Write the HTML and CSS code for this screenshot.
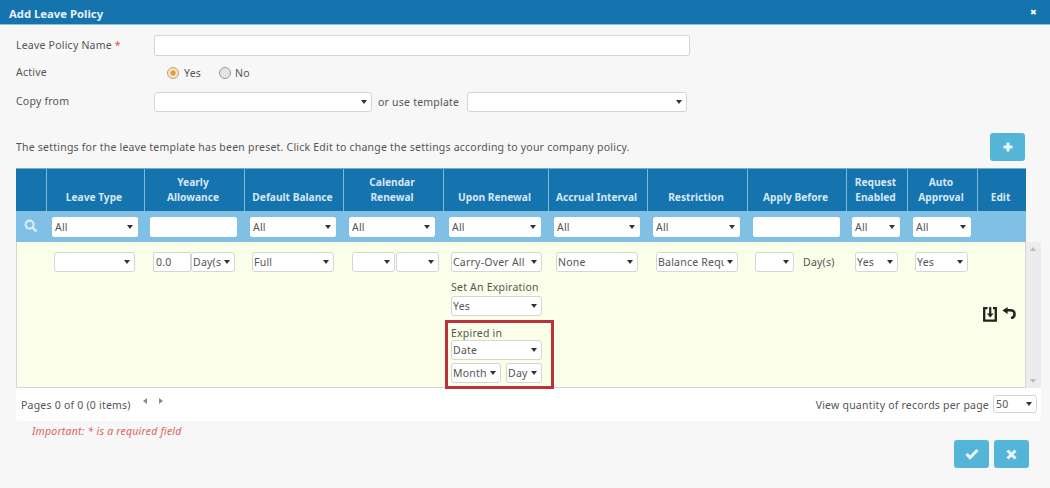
FILE: index.html
```html
<!DOCTYPE html>
<html lang="en">
<head>
<meta charset="utf-8">
<title>Add Leave Policy</title>
<link rel="stylesheet" href="styles.css">
</head>
<body>
<div class="titlebar"><span class="title">Add Leave Policy</span><span class="close">✖</span></div>

<div class="form">
  <div class="form-row r1"><label class="lbl">Leave Policy Name <span class="req">*</span></label><input class="field w-name" type="text"></div>
  <div class="form-row r2"><label class="lbl">Active</label>
    <div class="radios">
      <span class="radio on"></span><span class="rtext">Yes</span>
      <span class="radio"></span><span class="rtext">No</span>
    </div>
  </div>
  <div class="form-row r3"><label class="lbl">Copy from</label>
    <div class="sel w-copy"></div><span class="or">or use template</span><div class="sel w-tpl"></div>
  </div>
</div>

<div class="info">
  <span>The settings for the leave template has been preset. Click Edit to change the settings according to your company policy.</span>
  <button class="btn" aria-label="Add"><svg width="12" height="12" viewBox="0 0 12 12"><path d="M6 1.5v9M1.5 6h9" stroke="#eaf6fb" stroke-width="3"/></svg></button>
</div>

<div class="grid">
  <div class="cols head">
    <div></div>
    <div>Leave Type</div>
    <div>Yearly<br>Allowance</div>
    <div>Default Balance</div>
    <div>Calendar<br>Renewal</div>
    <div>Upon Renewal</div>
    <div>Accrual Interval</div>
    <div>Restriction</div>
    <div>Apply Before</div>
    <div>Request<br>Enabled</div>
    <div>Auto<br>Approval</div>
    <div>Edit</div>
  </div>
  <div class="cols filter">
    <div class="search"><svg width="14" height="14" viewBox="0 0 14 14"><circle cx="5.6" cy="5.6" r="4" fill="none" stroke="#d6ecf8" stroke-width="2.2"/><path d="M8.6 8.6l4 4" stroke="#d6ecf8" stroke-width="2.6"/></svg></div>
    <div><div class="sel flat w86">All</div></div>
    <div><input class="field flat w87" type="text"></div>
    <div><div class="sel flat w86">All</div></div>
    <div><div class="sel flat w86">All</div></div>
    <div><div class="sel flat w92">All</div></div>
    <div><div class="sel flat w86">All</div></div>
    <div><div class="sel flat w87">All</div></div>
    <div><input class="field flat w87" type="text"></div>
    <div><div class="sel flat w48">All</div></div>
    <div><div class="sel flat w58">All</div></div>
    <div></div>
  </div>
  <div class="body-wrap">
    <div class="cols body">
      <div></div>
      <div class="c-a"><div class="sel w81"></div></div>
      <div class="c-b"><div class="inline"><input class="field w38" type="text" value="0.0"><div class="sel w44">Day(s</div></div></div>
      <div class="c-c"><div class="sel w82">Full</div></div>
      <div class="c-d"><div class="inline g1"><div class="sel w43"></div><div class="sel w43"></div></div></div>
      <div class="c-e">
        <div class="sel w91">Carry-Over All</div>
        <div class="small-label first">Set An Expiration</div>
        <div class="sel w91">Yes</div>
        <div class="highlight">
          <div class="small-label">Expired in</div>
          <div class="sel w91">Date</div>
          <div class="inline g5 mt3"><div class="sel w50">Month</div><div class="sel w36">Day</div></div>
        </div>
      </div>
      <div class="c-f"><div class="sel w82">None</div></div>
      <div class="c-g"><div class="sel w82 clip"><span class="clip-text">Balance Requ</span></div></div>
      <div class="c-h"><div class="inline"><div class="sel w39"></div><span class="days">Day(s)</span></div></div>
      <div class="c-i"><div class="sel w43">Yes</div></div>
      <div class="c-j"><div class="sel w53">Yes</div></div>
      <div class="c-k">
        <svg width="14" height="15" viewBox="0 0 14 15"><path d="M4.5 1.2H1.2v12.4h11.6V1.2H10" fill="none" stroke="#222" stroke-width="2.3"/><path d="M7.2 0v7" stroke="#222" stroke-width="2.2"/><path d="M3.8 6.5h6.8L7.2 10.5z" fill="#222"/></svg>
        <svg width="14" height="12" viewBox="0 0 14 12"><path d="M5 3.2h3.4c5.4 0 5.4 7 .6 8" fill="none" stroke="#222" stroke-width="2.5"/><path d="M5.6 0v7L.4 3.4z" fill="#222"/></svg>
      </div>
    </div>
    <div class="scroll"><span class="up"></span><span class="down"></span></div>
  </div>
  <div class="pager">
    <div class="pages"><span>Pages 0 of 0 (0 items)</span><span class="arrow left"></span><span class="arrow right"></span></div>
    <div class="perpage"><span>View quantity of records per page</span><div class="sel w44">50</div></div>
  </div>
</div>

<div class="important">Important: * is a required field</div>

<div class="actions">
  <button class="btn" aria-label="Save"><svg width="14" height="12" viewBox="0 0 14 12"><path d="M1.5 6l3.6 3.6L12.5 2" fill="none" stroke="#eaf6fb" stroke-width="3"/></svg></button>
  <button class="btn" aria-label="Cancel"><svg width="11" height="11" viewBox="0 0 11 11"><path d="M1.5 1.5l8 8M9.5 1.5l-8 8" stroke="#eaf6fb" stroke-width="3"/></svg></button>
</div>
</body>
</html>
```

FILE: styles.css
```css
* { box-sizing: border-box; }
html, body { margin: 0; padding: 0; }
body {
  width: 1050px;
  height: 488px;
  overflow: hidden;
  background: #f7f7f7;
  color: #555;
  font-family: "Noto Sans", "DejaVu Sans", sans-serif;
  font-size: 10.5px;
  letter-spacing: 0.22px;
}

.titlebar {
  height: 25px;
  background: #1573ae;
  border-bottom: 1px solid #8dbfdc;
  color: #fff;
  display: flex;
  justify-content: space-between;
  padding: 5px 13px 0 9px;
}
.title { font-size: 11.3px; font-weight: 700; letter-spacing: 0; line-height: 17px; color: #e6f1f8; }
.close { font-size: 8px; line-height: 13px; }

.form { padding: 10px 0 0 16px; }
.form-row { display: flex; align-items: center; }
.r1 { height: 21px; }
.r2 { height: 20px; margin-top: 7px; }
.r3 { height: 20px; margin-top: 9px; }
.lbl { width: 138px; flex: none; margin-top: -2px; }
.req { color: #d9534f; }
.or { margin: 0 8px 0 6px; }

.field {
  display: block;
  height: 20px;
  padding: 0 2px;
  border: 1px solid #d5d5d5;
  border-radius: 2px;
  background: #fff;
  color: #555;
  font: inherit;
  letter-spacing: inherit;
}
.sel {
  position: relative;
  height: 20px;
  flex: none;
  padding-left: 1px;
  border: 1px solid #d5d5d5;
  border-radius: 3px;
  background: #fff;
  color: #555;
  line-height: 18px;
  white-space: nowrap;
  overflow: hidden;
}
.sel::after {
  content: "";
  position: absolute;
  right: 4px;
  top: 7px;
  border: 3.5px solid transparent;
  border-top: 4px solid #333;
  border-bottom: 0;
}
.clip-text { display: block; width: 66px; overflow: hidden; }
.flat { border-color: #fff; border-radius: 2px; padding-left: 2px; }

.w-name { width: 536px; height: 21px; }
.w-copy { width: 218px; }
.w-tpl { width: 220px; }
.w36 { width: 36px; } .w38 { width: 38px; } .w39 { width: 39px; }
.w43 { width: 43px; } .w44 { width: 44px; } .w48 { width: 48px; }
.w50 { width: 50px; } .w53 { width: 53px; } .w58 { width: 58px; }
.w81 { width: 81px; } .w82 { width: 82px; } .w86 { width: 86px; }
.w87 { width: 87px; } .w91 { width: 91px; } .w92 { width: 92px; }

.radios { display: flex; align-items: center; margin-left: 13px; }
.radio {
  width: 12px;
  height: 12px;
  border-radius: 50%;
  border: 1px solid #9a9a9a;
  background: #e4e4e4;
  flex: none;
}
.radio.on {
  border: 1px solid #c9a06f;
  background: radial-gradient(circle, #e39a3e 0 2.2px, #f6e3c5 3px);
}
.rtext { margin: 0 18px 0 5px; }
.rtext:last-child { margin-right: 0; margin-left: 4px; }

.info {
  display: flex;
  justify-content: space-between;
  align-items: center;
  height: 28px;
  margin-top: 21px;
  padding: 0 25px 0 16px;
}
.btn {
  width: 35px;
  height: 28px;
  padding: 0;
  border: 0;
  border-radius: 3px;
  background: #55b5d9;
  display: flex;
  align-items: center;
  justify-content: center;
}

.grid { margin: 7px 9px 0 16px; }
.cols { display: grid; grid-template-columns: 30px 98px 100px 99px 100px 105px 99px 100px 99px 61px 70px 49px; }
.head {
  width: 1010px;
  height: 43px;
  background: #1573ae;
  border-top: 1px solid #6fb0d6;
  color: #d5e8f4;
  font-weight: 700;
  font-size: 10.2px;
  letter-spacing: 0;
  line-height: 15px;
  text-align: center;
}
.head > div {
  display: flex;
  align-items: flex-end;
  justify-content: center;
  padding: 0 3px 6px 0;
  border-left: 1px solid #7fb8da;
}
.head > div:first-child { border-left: 0; }

.filter {
  width: 1010px;
  height: 31px;
  background: #7fc0e4;
  padding-top: 6px;
}
.filter > div { padding-left: 6px; }
.search { padding-left: 8px !important; padding-top: 2px; }

.body-wrap { display: flex; height: 146px; }
.body {
  width: 1010px;
  background: #fbfee8;
  box-shadow: inset 1px 0 #d5d5d5, inset -1px 0 #d5d5d5, inset 0 -1px #d5d5d5;
  padding-top: 10px;
}
.inline { display: flex; align-items: flex-start; }
.g1 { gap: 1px; }
.g5 { gap: 5px; }
.mt3 { margin-top: 3px; }
.c-a { padding-left: 8px; }
.c-b { padding-left: 9px; }
.c-c { padding-left: 8px; }
.c-d { padding-left: 9px; }
.c-e { padding-left: 8px; }
.c-f { padding-left: 8px; }
.c-g { padding-left: 9px; }
.c-h { padding-left: 8px; }
.c-i { padding-left: 9px; }
.c-j { padding-left: 8px; }
.c-k {
  display: flex;
  align-items: flex-start;
  gap: 5px;
  padding-left: 6px;
  align-self: center;
  margin-top: -12px;
}
.small-label { line-height: 13px; }
.small-label.first { margin-top: 9px; margin-bottom: 2px; }
.days { margin: 3px 0 0 9px; }
.highlight {
  width: 109px;
  height: 69px;
  margin: 4px 0 0 -6px;
  padding: 4px 9px 0 3px;
  border: 3px solid #b9323c;
}

.scroll {
  position: relative;
  width: 15px;
  background: #ececec;
}
.up, .down {
  position: absolute;
  left: 4px;
  border: 3.5px solid transparent;
}
.up { top: 5px; border-bottom: 4px solid #bbb; border-top: 0; }
.down { bottom: 5px; border-top: 4px solid #bbb; border-bottom: 0; }

.pager {
  display: flex;
  justify-content: space-between;
  align-items: center;
  height: 33px;
  padding: 0 4px 0 5px;
  background: #fff;
  border-radius: 0 0 4px 4px;
}
.pages { display: flex; align-items: center; }
.arrow {
  width: 0;
  height: 0;
  margin-top: -8px;
  border: 3px solid transparent;
}
.arrow.left { margin-left: 12px; border-right: 4px solid #888; border-left: 0; }
.arrow.right { margin-left: 12px; border-left: 4px solid #888; border-right: 0; }
.perpage { display: flex; align-items: center; gap: 4px; }
.perpage .sel { height: 18px; line-height: 16px; margin-top: -1px; padding-left: 2px; }
.perpage .sel::after { top: 6px; }

.important {
  margin: 3px 0 0 32px;
  color: #d8645f;
  font-style: italic;
  line-height: 14px;
}
.actions {
  display: flex;
  justify-content: flex-end;
  gap: 5px;
  margin-top: 2px;
  padding-right: 21px;
}
```
